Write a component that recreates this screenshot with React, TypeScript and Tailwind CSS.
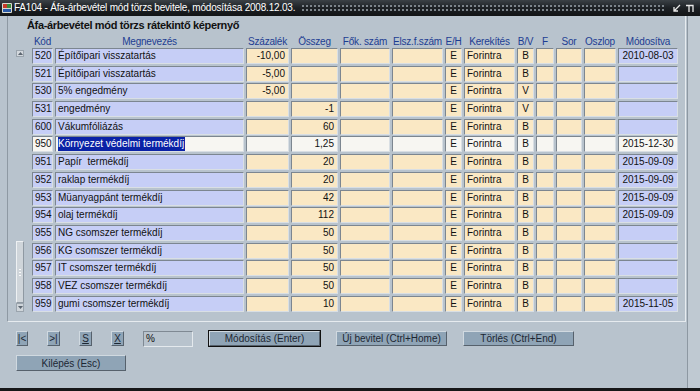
import React from 'react';

type Row = {
  kod: string;
  nev: string;
  szazalek: string;
  osszeg: string;
  bv: string;
  mod: string;
  selected?: boolean;
};

const rows: Row[] = [
  { kod: '520', nev: 'Építőipari visszatartás', szazalek: '-10,00', osszeg: '', bv: 'B', mod: '2010-08-03' },
  { kod: '521', nev: 'Építőipari visszatartás', szazalek: '-5,00', osszeg: '', bv: 'B', mod: '' },
  { kod: '530', nev: '5% engedmény', szazalek: '-5,00', osszeg: '', bv: 'V', mod: '' },
  { kod: '531', nev: 'engedmény', szazalek: '', osszeg: '-1', bv: 'V', mod: '' },
  { kod: '600', nev: 'Vákumfóliázás', szazalek: '', osszeg: '60', bv: 'B', mod: '' },
  { kod: '950', nev: 'Környezet védelmi termékdíj', szazalek: '', osszeg: '1,25', bv: 'B', mod: '2015-12-30', selected: true },
  { kod: '951', nev: 'Papír  termékdíj', szazalek: '', osszeg: '20', bv: 'B', mod: '2015-09-09' },
  { kod: '952', nev: 'raklap termékdíj', szazalek: '', osszeg: '20', bv: 'B', mod: '2015-09-09' },
  { kod: '953', nev: 'Müanyagpánt termékdíj', szazalek: '', osszeg: '42', bv: 'B', mod: '2015-09-09' },
  { kod: '954', nev: 'olaj termékdíj', szazalek: '', osszeg: '112', bv: 'B', mod: '2015-09-09' },
  { kod: '955', nev: 'NG csomszer termékdíj', szazalek: '', osszeg: '50', bv: 'B', mod: '' },
  { kod: '956', nev: 'KG csomszer termékdíj', szazalek: '', osszeg: '50', bv: 'B', mod: '' },
  { kod: '957', nev: 'IT csomszer termékdíj', szazalek: '', osszeg: '50', bv: 'B', mod: '' },
  { kod: '958', nev: 'VEZ csomszer termékdíj', szazalek: '', osszeg: '50', bv: 'B', mod: '' },
  { kod: '959', nev: 'gumi csomszer termékdíj', szazalek: '', osszeg: '10', bv: 'B', mod: '2015-11-05' },
];

const headers = [
  'Kód', 'Megnevezés', 'Százalék', 'Összeg', 'Fők. szám', 'Elsz.f.szám',
  'E/H', 'Kerekítés', 'B/V', 'F', 'Sor', 'Oszlop', 'Módosítva',
];

const gridCols =
  'grid grid-cols-[21px_189px_43px_47px_50px_51px_17px_51px_17px_18px_26px_32px_60px] gap-x-[2px]';

function Cell({
  children,
  tone,
  align = 'left',
}: {
  children?: React.ReactNode;
  tone: 'blue' | 'cream' | 'white';
  align?: 'left' | 'right' | 'center';
}) {
  const bg =
    tone === 'blue' ? 'bg-[#c6cef6]' : tone === 'cream' ? 'bg-[#fae8c4]' : 'bg-[#f7f6f2]';
  const al =
    align === 'right' ? 'justify-end pr-[3px]' : align === 'center' ? 'justify-center' : 'justify-start pl-[2px]';
  return (
    <div
      className={`${bg} ${al} flex items-center overflow-hidden whitespace-pre border border-t-[#7c8690] border-l-[#7c8690] border-b-[#d9dfe4] border-r-[#d9dfe4] text-[10px] leading-[14px] text-[#111]`}
    >
      {children}
    </div>
  );
}

function NavButton({ children, w }: { children: React.ReactNode; w: string }) {
  return (
    <div
      className={`${w} h-[15px] flex items-center justify-center bg-[#8fa4b6] border border-t-[#d0d9e0] border-l-[#d0d9e0] border-b-[#56616c] border-r-[#56616c] text-[10px] text-[#1c2733]`}
    >
      {children}
    </div>
  );
}

export default function App() {
  return (
    <div className="w-[700px] h-[391px] bg-[#b8c3cd] flex flex-col overflow-hidden font-['Liberation_Sans',Arial,sans-serif]">
      {/* Title bar */}
      <div className="h-[16px] flex items-center bg-gradient-to-b from-[#3b4146] via-[#1d2125] to-[#121416] text-white">
        <div className="ml-[2px] w-[10px] h-[10px] relative">
          <div className="absolute inset-0 bg-[#d8dbd0] rounded-[1px]" />
          <div className="absolute left-[1px] top-[1px] w-[4px] h-[4px] bg-[#c83a2a]" />
          <div className="absolute right-[1px] top-[1px] w-[4px] h-[4px] bg-[#3a8a3a]" />
          <div className="absolute left-[1px] bottom-[1px] w-[8px] h-[3px] bg-[#2a5aa8]" />
        </div>
        <span className="ml-[2px] text-[10px] leading-[12px] tracking-[-0.2px] whitespace-nowrap">
          FA104 - Áfa-árbevétel mód törzs bevitele, módosítása 2008.12.03.
        </span>
        <div className="ml-[6px] flex-1 h-[8px] bg-[radial-gradient(#7d858c_0.8px,transparent_1px)] bg-[length:4px_4px]" />
        <div className="flex items-center gap-[4px] mx-[6px]">
          <svg width="9" height="9" viewBox="0 0 9 9">
            <path d="M8 1 L2 7 M2 3 V7 H6" stroke="#e8e8e8" strokeWidth="1.3" fill="none" />
          </svg>
          <svg width="9" height="9" viewBox="0 0 9 9">
            <path d="M1 1.5 H8 V8 M4 1.5 V8" stroke="#e8e8e8" strokeWidth="1.3" fill="none" />
          </svg>
        </div>
      </div>

      <div className="flex-1 flex">
        {/* Main window */}
        <div className="w-[687px] flex flex-col">
          <div className="ml-[7px] w-[679px] h-[306px] border-l border-l-[#8e99a3] border-b border-b-[#e6ebef] border-r border-r-[#e6ebef] flex flex-col">
            <div className="h-[15px] pl-[19px] pt-[3px] text-[11px] leading-[12px] font-bold tracking-[-0.35px] text-[#111] whitespace-nowrap">
              Áfa-árbevétel mód törzs rátekintő képernyő
            </div>
            <div className="flex pl-[24px]">
              <div className={`${gridCols} h-[17px] items-end`}>
                {headers.map((h) => (
                  <div
                    key={h}
                    className="text-center whitespace-nowrap text-[10px] leading-[12px] text-[#1d3d92] tracking-[-0.2px]"
                  >
                    {h}
                  </div>
                ))}
              </div>
            </div>

            <div className="flex pl-[8px] gap-[8px]">
              {/* Scrollbar */}
              <div className="w-[8px] h-[262px] mt-[2px] flex flex-col justify-between">
                <div className="h-[7px] w-[8px] bg-[#d3d8dd] border border-[#9aa4ad] flex items-center justify-center">
                  <svg width="5" height="3" viewBox="0 0 5 3">
                    <path d="M0 3 L2.5 0 L5 3 Z" fill="#5b6570" />
                  </svg>
                </div>
                <div className="flex flex-col">
                  <div className="h-[62px] w-[8px] bg-[#cfd5da] border border-t-[#eef1f3] border-l-[#eef1f3] border-b-[#8f99a2] border-r-[#8f99a2] flex flex-col items-center justify-center gap-[2px]">
                    <div className="w-[2px] h-[1px] bg-[#fafafa]" />
                    <div className="w-[2px] h-[1px] bg-[#fafafa]" />
                    <div className="w-[2px] h-[1px] bg-[#fafafa]" />
                  </div>
                  <div className="h-[9px] w-[8px] bg-[#cfd5da] border border-[#9aa4ad] flex items-center justify-center">
                    <svg width="5" height="3" viewBox="0 0 5 3">
                      <path d="M0 0 L2.5 3 L5 0 Z" fill="#5b6570" />
                    </svg>
                  </div>
                </div>
              </div>

              {/* Rows */}
              <div className={`${gridCols} auto-rows-[16px] gap-y-[1.7px]`}>
                {rows.map((r) => {
                  const blue = r.selected ? 'white' : 'blue';
                  const cream = r.selected ? 'white' : 'cream';
                  return (
                    <React.Fragment key={r.kod}>
                      <Cell tone={blue}>{r.kod}</Cell>
                      <Cell tone={blue}>
                        {r.selected ? (
                          <span className="bg-[#0a22a6] text-white pr-[1px]">{r.nev}</span>
                        ) : (
                          r.nev
                        )}
                      </Cell>
                      <Cell tone={cream} align="right">{r.szazalek}</Cell>
                      <Cell tone={cream} align="right">{r.osszeg}</Cell>
                      <Cell tone={cream} />
                      <Cell tone={cream} />
                      <Cell tone={cream} align="center">E</Cell>
                      <Cell tone={cream}>Forintra</Cell>
                      <Cell tone={cream} align="center">{r.bv}</Cell>
                      <Cell tone={cream} />
                      <Cell tone={cream} />
                      <Cell tone={cream} />
                      <Cell tone={blue} align="center">{r.mod}</Cell>
                    </React.Fragment>
                  );
                })}
              </div>
            </div>
          </div>

          {/* Buttons */}
          <div className="flex items-center mt-[8px] pl-[16px]">
            <NavButton w="w-[12px]">|&lt;</NavButton>
            <div className="ml-[19px]">
              <NavButton w="w-[13px]">&gt;|</NavButton>
            </div>
            <div className="ml-[19px]">
              <NavButton w="w-[13px]"><span className="underline">S</span></NavButton>
            </div>
            <div className="ml-[19px]">
              <NavButton w="w-[13px]"><span className="underline">X</span></NavButton>
            </div>
            <div className="ml-[19px] w-[50px] h-[16px] bg-[#b8c3cd] border border-t-[#7f8993] border-l-[#7f8993] border-b-[#e4e9ed] border-r-[#e4e9ed] text-[10px] leading-[14px] pl-[2px] text-[#111]">
              %
            </div>
            <div className="ml-[15px] border border-[#111]">
              <NavButton w="w-[111px]">Módosítás (Enter)</NavButton>
            </div>
            <div className="ml-[15px]">
              <NavButton w="w-[111px]">Új bevitel (Ctrl+Home)</NavButton>
            </div>
            <div className="ml-[16px]">
              <NavButton w="w-[111px]">Törlés (Ctrl+End)</NavButton>
            </div>
          </div>
          <div className="mt-[8px] pl-[16px]">
            <div className="w-[110px] h-[16px] flex items-center justify-center bg-[#8fa4b6] border border-t-[#d0d9e0] border-l-[#d0d9e0] border-b-[#56616c] border-r-[#56616c] text-[10px] text-[#1c2733]">
              Kilépés (Esc)
            </div>
          </div>
        </div>
        {/* Right edge strip */}
        <div className="flex-1 border-l border-l-[#8d98a2] bg-[#bfc9d2]" />
      </div>
      <div className="h-[3px] bg-[#161718]" />
    </div>
  );
}
